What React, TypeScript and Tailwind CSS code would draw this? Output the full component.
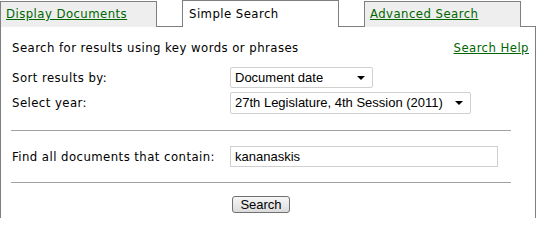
import React from "react";

const body = { fontFamily: '"DejaVu Sans Condensed", "DejaVu Sans", sans-serif' };
const arial = { fontFamily: '"Liberation Sans", Arial, sans-serif' };

function Tab({ label, active }: { label: string; active?: boolean }) {
  if (active) {
    return (
      <div className="relative z-10 w-[157px] h-[27px] bg-white border border-b-0 border-[#7f7f7f] pl-[6px] pt-[5px] text-[13px] leading-[16px] tracking-[0.45px] text-black">
        {label}
      </div>
    );
  }
  return (
    <div className="w-[157px] h-[26px] mt-[1px] bg-[#eeeeee] border border-b-0 border-[#7f7f7f] pl-[5px] pt-[4px] text-[13px] leading-[16px] tracking-[0.45px]">
      <span className="text-[#006600] underline">{label}</span>
    </div>
  );
}

function Select({ text, width, height }: { text: string; width: number; height: number }) {
  return (
    <div
      className="flex items-center justify-between whitespace-nowrap bg-white border border-[#d0d0d0] rounded-[2px] pl-[4px] pr-[7px] text-[13px] tracking-normal text-black"
      style={{ ...arial, width, height }}
    >
      <span>{text}</span>
      <span className="w-0 h-0 border-l-[4px] border-r-[4px] border-t-[4px] border-l-transparent border-r-transparent border-t-black" />
    </div>
  );
}

export default function App() {
  return (
    <div className="w-[540px] h-[218px] bg-white overflow-hidden" style={body}>
      <div className="flex gap-[25px] h-[26px] items-start">
        <Tab label="Display Documents" />
        <Tab label="Simple Search" active />
        <Tab label="Advanced Search" />
      </div>
      <div className="w-[536px] h-[200px] border border-[#7f7f7f] border-b-0 pl-[10px] flex flex-col text-[13px] tracking-[0.45px] text-black">
        <div className="mt-[13px] h-[16px] flex items-center justify-between pr-[6px] leading-[16px]">
          <span className="pl-[1px]">Search for results using key words or phrases</span>
          <span className="text-[#006600] underline">Search Help</span>
        </div>
        <div className="mt-[11px] flex items-center">
          <span className="w-[219px] pl-[1px]">Sort results by:</span>
          <Select text="Document date" width={143} height={21} />
        </div>
        <div className="mt-[4px] flex items-center">
          <span className="w-[219px] pl-[1px]">Select year:</span>
          <Select text="27th Legislature, 4th Session (2011)" width={241} height={22} />
        </div>
        <div className="mt-[16px] w-[500px] h-px bg-[#a0a0a0]" />
        <div className="mt-[15px] flex items-center">
          <span className="w-[219px] pl-[1px]">Find all documents that contain:</span>
          <div
            className="w-[268px] h-[21px] border border-[#d0d0d0] flex items-center pl-[4px] text-[13px] tracking-normal text-black"
            style={arial}
          >
            kananaskis
          </div>
        </div>
        <div className="mt-[15px] w-[500px] h-px bg-[#a0a0a0]" />
        <div className="mt-[13px] pl-[221px]">
          <div
            className="w-[58px] h-[17px] flex items-center justify-center border border-[#707070] rounded-[3px] bg-gradient-to-b from-[#f6f6f6] to-[#dcdcdc] text-[13px] tracking-normal text-black"
            style={arial}
          >
            Search
          </div>
        </div>
      </div>
    </div>
  );
}
